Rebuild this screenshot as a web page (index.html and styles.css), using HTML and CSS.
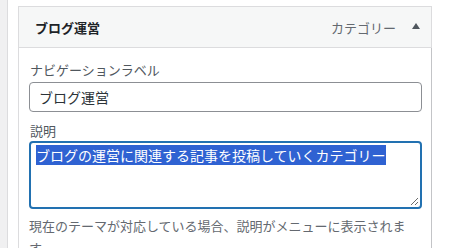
FILE: index.html
```html
<!DOCTYPE html>
<html lang="ja">
<head>
<meta charset="utf-8">
<link rel="stylesheet" href="styles.css">
</head>
<body>
<div class="sidebar"></div>
<div class="main">
  <div class="panel">
    <div class="panel-head">
      <h3 class="title">ブログ運営</h3>
      <span class="type">カテゴリー</span>
      <span class="toggle"></span>
    </div>
    <div class="panel-body">
      <label class="label">ナビゲーションラベル</label>
      <div class="input">ブログ運営</div>
      <label class="label label-desc">説明</label>
      <div class="textarea">
        <span class="sel">ブログの運営に関連する記事を投稿していくカテゴリー</span>
        <svg class="grip" width="10" height="10" viewBox="0 0 10 10"><path d="M9 2 L2 9 M9 6 L6 9" stroke="#6b6b6b" stroke-width="1"/></svg>
      </div>
      <p class="help">現在のテーマが対応している場合、説明がメニューに表示されます。</p>
    </div>
  </div>
</div>
</body>
</html>
```
FILE: styles.css
```css
html, body {
  margin: 0;
  padding: 0;
  height: 100%;
  background: #fff;
  font-family: "Noto Sans CJK JP", "Noto Sans", sans-serif;
  overflow: hidden;
}
body {
  display: flex;
}
.sidebar {
  width: 7px;
  flex: none;
  background: #f0f0f1;
  border-right: 1px solid #dcdcde;
}
.main {
  padding: 6px 0 0 10px;
}
.panel {
  width: 414px;
  box-sizing: border-box;
}
.panel-head {
  height: 42px;
  box-sizing: border-box;
  background: #f6f7f7;
  border: 1px solid #dcdcde;
  display: flex;
  align-items: center;
  padding: 0 11px 0 16px;
}
.title {
  margin: 0;
  font-size: 13px;
  font-weight: 700;
  color: #1d2327;
  flex: 1;
}
.type {
  font-size: 13px;
  color: #646970;
  margin-right: 16px;
}
.toggle {
  width: 0;
  height: 0;
  border-left: 4.5px solid transparent;
  border-right: 4.5px solid transparent;
  border-bottom: 6px solid #50575e;
  margin-top: -2px;
}
.panel-body {
  border-left: 1px solid #dcdcde;
  border-right: 1px solid #c3c4c7;
  padding: 12px 9px 0 10px;
  height: 220px;
}
.label {
  display: block;
  font-size: 13px;
  line-height: 20px;
  color: #50575e;
  padding-left: 1px;
}
.input {
  margin-top: 2px;
  height: 30px;
  box-sizing: border-box;
  border: 1px solid #8c8f94;
  border-radius: 4px;
  padding: 0 9px;
  font-size: 14px;
  line-height: 28px;
  color: #2c3338;
}
.label-desc {
  margin-top: 9px;
}
.textarea {
  position: relative;
  margin-top: 0;
  height: 68px;
  box-sizing: border-box;
  border: 2px solid #2271b1;
  border-radius: 4px;
  padding: 2px 5px;
  font-size: 14px;
  line-height: 20px;
  color: #2c3338;
}
.sel {
  background: #2f62d2;
  color: #fff;
}
.grip {
  position: absolute;
  right: 1px;
  bottom: 1px;
}
.help {
  margin: 6px 0 0;
  font-size: 13px;
  line-height: 22px;
  color: #646970;
  padding-right: 8px;
}
```
